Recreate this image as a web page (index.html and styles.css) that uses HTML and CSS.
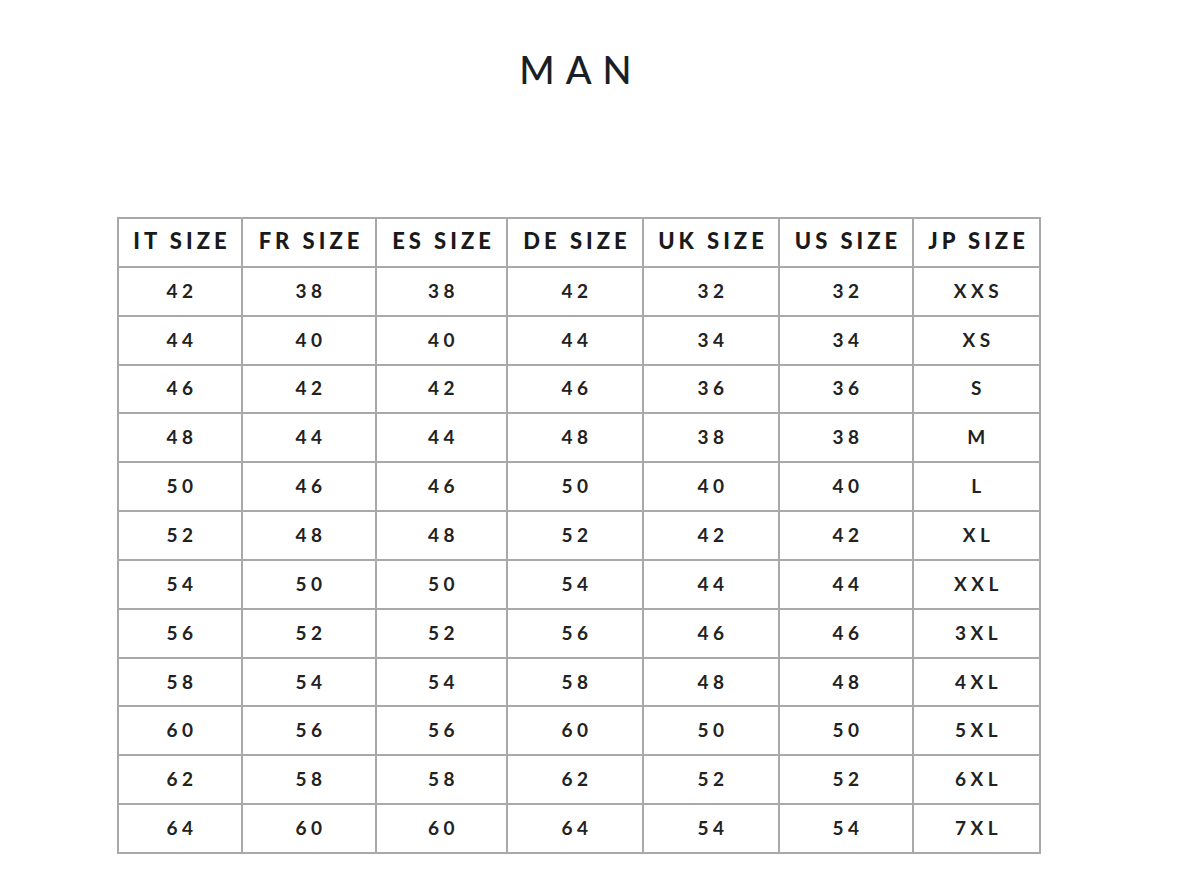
FILE: index.html
```html
<!DOCTYPE html>
<html>
<head>
<meta charset="utf-8">
<link rel="stylesheet" href="styles.css">
</head>
<body>
<div class="page">
  <h1 class="title">MAN</h1>
  <table class="sizes">
    <colgroup>
      <col class="c1"><col class="c2"><col class="c3"><col class="c4"><col class="c5"><col class="c6"><col class="c7">
    </colgroup>
    <thead>
      <tr><th>IT SIZE</th><th>FR SIZE</th><th>ES SIZE</th><th>DE SIZE</th><th>UK SIZE</th><th>US SIZE</th><th>JP SIZE</th></tr>
    </thead>
    <tbody>
      <tr><td>42</td><td>38</td><td>38</td><td>42</td><td>32</td><td>32</td><td>XXS</td></tr>
      <tr><td>44</td><td>40</td><td>40</td><td>44</td><td>34</td><td>34</td><td>XS</td></tr>
      <tr><td>46</td><td>42</td><td>42</td><td>46</td><td>36</td><td>36</td><td>S</td></tr>
      <tr><td>48</td><td>44</td><td>44</td><td>48</td><td>38</td><td>38</td><td>M</td></tr>
      <tr><td>50</td><td>46</td><td>46</td><td>50</td><td>40</td><td>40</td><td>L</td></tr>
      <tr><td>52</td><td>48</td><td>48</td><td>52</td><td>42</td><td>42</td><td>XL</td></tr>
      <tr><td>54</td><td>50</td><td>50</td><td>54</td><td>44</td><td>44</td><td>XXL</td></tr>
      <tr><td>56</td><td>52</td><td>52</td><td>56</td><td>46</td><td>46</td><td>3XL</td></tr>
      <tr><td>58</td><td>54</td><td>54</td><td>58</td><td>48</td><td>48</td><td>4XL</td></tr>
      <tr><td>60</td><td>56</td><td>56</td><td>60</td><td>50</td><td>50</td><td>5XL</td></tr>
      <tr><td>62</td><td>58</td><td>58</td><td>62</td><td>52</td><td>52</td><td>6XL</td></tr>
      <tr><td>64</td><td>60</td><td>60</td><td>64</td><td>54</td><td>54</td><td>7XL</td></tr>
    </tbody>
  </table>
</div>
</body>
</html>
```
FILE: styles.css
```css
html, body {
  margin: 0;
  padding: 0;
  background: #ffffff;
}
body {
  font-family: "Lato", "Open Sans", sans-serif;
  color: #1e1e1e;
}
.page {
  width: 922px;
  padding: 49px 0 0 117px;
  display: flex;
  flex-direction: column;
}
.title {
  margin: 0 0 128px 0;
  text-align: center;
  font-size: 38px;
  line-height: 40px;
  font-weight: 500;
  letter-spacing: 11px;
  padding-left: 6px;
  color: #1b1e24;
}
.sizes {
  border-collapse: collapse;
  width: 922px;
  table-layout: fixed;
}
.c1 { width: 124px; }
.c2 { width: 134px; }
.c3 { width: 131px; }
.c4 { width: 136px; }
.c5 { width: 136px; }
.c6 { width: 134px; }
.c7 { width: 127px; }
.sizes th, .sizes td {
  border: 2px solid #a9a9a9;
  text-align: center;
  padding: 0;
  height: 46.85px;
}
.sizes th {
  height: 43.85px;
  font-size: 22px;
  font-weight: 900;
  letter-spacing: 4px;
  white-space: nowrap;
  color: #1a1a1a;
  padding-left: 4px;
  padding-bottom: 3px;
}
.sizes td {
  font-size: 19px;
  font-weight: 700;
  letter-spacing: 4.5px;
  color: #222;
  padding-left: 4px;
  padding-bottom: 2px;
  height: 44.85px;
}
```
